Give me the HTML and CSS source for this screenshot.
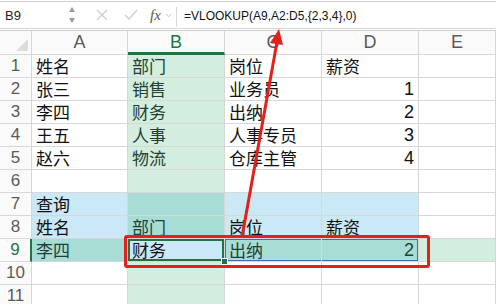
FILE: index.html
```html
<!DOCTYPE html>
<html lang="zh">
<head>
  <meta charset="UTF-8" />
  <title>VLOOKUP</title>
  <link rel="stylesheet" href="styles.css">
</head>
<body>
  <div class="app">
    <div class="formula-bar">
      <div class="name-box">
        <span>B9</span>
        <svg class="spin" viewBox="0 0 8 18" width="8" height="18">
          <path d="M4 1 L7 6 L1 6 Z" fill="#9a9a9a"/>
          <path d="M4 17 L7 12 L1 12 Z" fill="#9a9a9a"/>
        </svg>
      </div>
      <div class="fb-icons">
        <svg viewBox="0 0 12 12" width="12" height="12">
          <path d="M1 1 L11 11 M11 1 L1 11" stroke="#cfcfcf" stroke-width="1.4" fill="none"/>
        </svg>
        <svg viewBox="0 0 14 12" width="14" height="12">
          <path d="M1 6 L5 10 L13 1" stroke="#cfcfcf" stroke-width="1.4" fill="none"/>
        </svg>
        <span class="fx">fx</span>
        <svg viewBox="0 0 8 6" width="7" height="5">
          <path d="M1 1 L4 4.5 L7 1" stroke="#bdbdbd" stroke-width="1" fill="none"/>
        </svg>
      </div>
      <div class="formula">=VLOOKUP(A9,A2:D5,{2,3,4},0)</div>
    </div>

    <div class="sheet">
      <div class="hd corner"></div>
      <div class="hd">A</div>
      <div class="hd sel-col">B</div>
      <div class="hd">C</div>
      <div class="hd">D</div>
      <div class="hd">E</div>

      <div class="rn">1</div>
      <div class="c">姓名</div>
      <div class="c g">部门</div>
      <div class="c">岗位</div>
      <div class="c">薪资</div>
      <div class="c"></div>

      <div class="rn">2</div>
      <div class="c">张三</div>
      <div class="c g">销售</div>
      <div class="c">业务员</div>
      <div class="c num">1</div>
      <div class="c"></div>

      <div class="rn">3</div>
      <div class="c">李四</div>
      <div class="c g">财务</div>
      <div class="c">出纳</div>
      <div class="c num">2</div>
      <div class="c"></div>

      <div class="rn">4</div>
      <div class="c">王五</div>
      <div class="c g">人事</div>
      <div class="c">人事专员</div>
      <div class="c num">3</div>
      <div class="c"></div>

      <div class="rn">5</div>
      <div class="c">赵六</div>
      <div class="c g">物流</div>
      <div class="c">仓库主管</div>
      <div class="c num">4</div>
      <div class="c"></div>

      <div class="rn">6</div>
      <div class="c"></div>
      <div class="c g"></div>
      <div class="c"></div>
      <div class="c"></div>
      <div class="c"></div>

      <div class="rn">7</div>
      <div class="c b">查询</div>
      <div class="c t"></div>
      <div class="c b"></div>
      <div class="c b"></div>
      <div class="c"></div>

      <div class="rn">8</div>
      <div class="c b">姓名</div>
      <div class="c t">部门</div>
      <div class="c b">岗位</div>
      <div class="c b">薪资</div>
      <div class="c"></div>

      <div class="rn sel-row">9</div>
      <div class="c t">李四</div>
      <div class="c b active">财务</div>
      <div class="c t rng-l">出纳</div>
      <div class="c t num rng-r">2</div>
      <div class="c g"></div>

      <div class="rn">10</div>
      <div class="c"></div>
      <div class="c g"></div>
      <div class="c"></div>
      <div class="c"></div>
      <div class="c"></div>

      <div class="rn">11</div>
      <div class="c"></div>
      <div class="c g"></div>
      <div class="c"></div>
      <div class="c"></div>
      <div class="c"></div>
    </div>

    <div class="red-box"></div>
    <svg class="arrow" viewBox="0 0 496 304" width="496" height="304">
      <line x1="242" y1="237" x2="277" y2="42" stroke="#e3201b" stroke-width="3"/>
      <polygon points="279,29 283,45 270,43" fill="#e3201b"/>
    </svg>
  </div>
</body>
</html>
```

FILE: styles.css
```css
body {
  margin: 0;
  background: #fff;
  font-family: "Noto Sans CJK SC", "Noto Sans", sans-serif;
  overflow: hidden;
}

.app {
  position: relative;
  width: 496px;
  height: 304px;
  overflow: hidden;
}

/* formula bar */
.formula-bar {
  margin-top: 1px;
  height: 26px;
  border-top: 1px solid #d0d0d0;
  border-bottom: 1px solid #d6d6d6;
  display: flex;
  align-items: center;
}

.name-box {
  width: 80px;
  display: flex;
  align-items: center;
  justify-content: space-between;
  padding: 0 4px 0 5px;
  box-sizing: border-box;
  font-family: "Liberation Sans", sans-serif;
  font-size: 13px;
  color: #222;
}

.fb-icons {
  width: 96px;
  display: flex;
  align-items: center;
  padding-left: 16px;
  box-sizing: border-box;
}

.fb-icons svg:first-child {
  margin-right: 16px;
}

.fb-icons svg:nth-child(2) {
  margin-right: 12px;
}

.fx {
  font-family: "Liberation Serif", serif;
  font-style: italic;
  font-size: 15px;
  color: #555;
  margin-right: 4px;
}

.formula {
  flex: 1;
  height: 20px;
  margin-top: 4px;
  border-left: 1px solid #d8d8d8;
  padding-left: 7px;
  font-family: "Liberation Sans", sans-serif;
  font-size: 12px;
  line-height: 18px;
  color: #111;
}

/* sheet grid */
.sheet {
  margin-top: 1px;
  border-top: 1px solid #cfcfcf;
  display: grid;
  grid-template-columns: 32px 96px 97px 97px 97px 1fr;
  grid-template-rows: 24px;
  grid-auto-rows: 23px;
}

.sheet > div {
  box-sizing: border-box;
  border-right: 1px solid #d7d7d7;
  border-bottom: 1px solid #d7d7d7;
  position: relative;
}

.hd {
  background: #fafafa;
  font-family: "Liberation Sans", sans-serif;
  font-size: 18px;
  color: #5a5a5a;
  text-align: center;
  line-height: 23px;
}

.corner::after {
  content: "";
  position: absolute;
  right: 3px;
  bottom: 3px;
  border-left: 12px solid transparent;
  border-bottom: 12px solid #dcdcdc;
}

.hd.sel-col {
  color: #217346;
  border-bottom: 3px solid #217346;
  line-height: 22px;
}

.rn {
  background: #fafafa;
  font-family: "Liberation Sans", sans-serif;
  font-size: 17px;
  color: #5a5a5a;
  text-align: center;
  line-height: 22px;
}

.rn.sel-row {
  color: #217346;
  border-right: 2px solid #217346;
}

.c {
  font-size: 17px;
  line-height: 22px;
  color: #111;
  padding: 0 4px;
  white-space: nowrap;
}

.num {
  text-align: right;
  padding-right: 4px;
  font-family: "Liberation Sans", sans-serif;
  font-size: 18px;
}

.g {
  background: #d3eedf;
  color: #233f33;
}

.b {
  background: #cbe8f6;
}

.t {
  background: #a8ddd5;
  color: #1f3f38;
}

.active {
  box-shadow: inset 0 0 0 2px #217346;
  color: #111;
}

.active::after {
  content: "";
  position: absolute;
  right: -4px;
  bottom: -4px;
  width: 5px;
  height: 5px;
  background: #217346;
  border: 1px solid #fff;
  z-index: 2;
}

.rng-l {
  box-shadow: inset 1px 1px 0 #3d6fb6, inset 0 -1px 0 #3d6fb6;
}

.rng-r {
  box-shadow: inset -1px 1px 0 #3d6fb6, inset 0 -1px 0 #3d6fb6;
}

/* annotation overlays */
.red-box {
  position: absolute;
  left: 124px;
  top: 235px;
  width: 306px;
  height: 33px;
  box-sizing: border-box;
  border: 3px solid #e3201b;
  border-radius: 3px;
}

.arrow {
  position: absolute;
  left: 0;
  top: 0;
  pointer-events: none;
}
```
